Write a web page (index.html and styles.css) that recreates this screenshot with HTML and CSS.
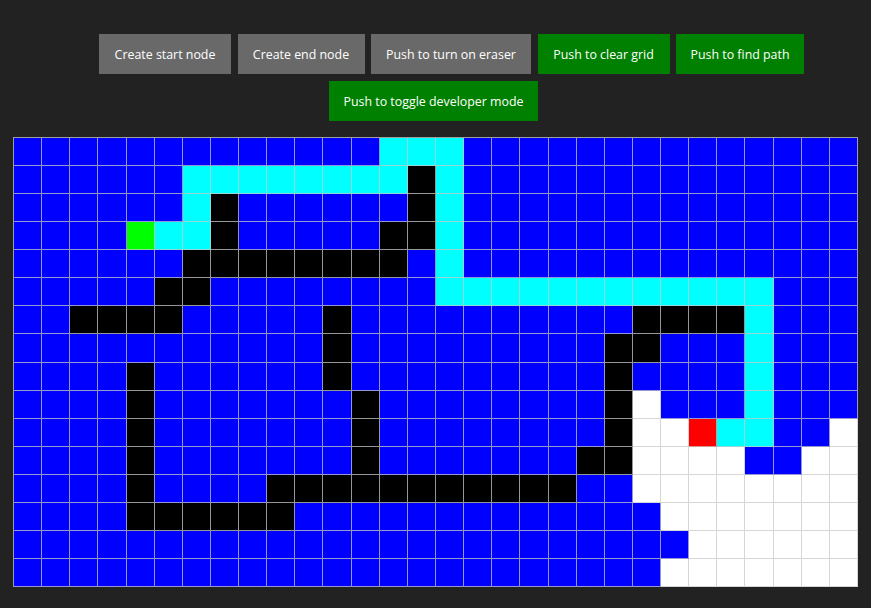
FILE: index.html
```html
<!DOCTYPE html>
<html lang="en">
<head>
<meta charset="utf-8">
<title>Pathfinding Visualizer</title>
<link rel="stylesheet" href="styles.css">
</head>
<body>
<div class="page">
  <div class="controls">
    <div class="row row-main">
      <button class="btn btn-gray btn-start">Create start node</button>
      <button class="btn btn-gray btn-end">Create end node</button>
      <button class="btn btn-gray btn-eraser">Push to turn on eraser</button>
      <button class="btn btn-green btn-clear">Push to clear grid</button>
      <button class="btn btn-green btn-find">Push to find path</button>
    </div>
    <div class="row row-dev">
      <button class="btn btn-green btn-dev">Push to toggle developer mode</button>
    </div>
  </div>
  <div class="grid">
    <!-- row 0 -->
    <i></i><i></i><i></i><i></i><i></i><i></i><i></i><i></i><i></i><i></i><i></i><i></i><i></i><i class="c"></i><i class="c"></i><i class="c"></i><i></i><i></i><i></i><i></i><i></i><i></i><i></i><i></i><i></i><i></i><i></i><i></i><i></i><i></i>
    <!-- row 1 -->
    <i></i><i></i><i></i><i></i><i></i><i></i><i class="c"></i><i class="c"></i><i class="c"></i><i class="c"></i><i class="c"></i><i class="c"></i><i class="c"></i><i class="c"></i><i class="k"></i><i class="c"></i><i></i><i></i><i></i><i></i><i></i><i></i><i></i><i></i><i></i><i></i><i></i><i></i><i></i><i></i>
    <!-- row 2 -->
    <i></i><i></i><i></i><i></i><i></i><i></i><i class="c"></i><i class="k"></i><i></i><i></i><i></i><i></i><i></i><i></i><i class="k"></i><i class="c"></i><i></i><i></i><i></i><i></i><i></i><i></i><i></i><i></i><i></i><i></i><i></i><i></i><i></i><i></i>
    <!-- row 3 -->
    <i></i><i></i><i></i><i></i><i class="g"></i><i class="c"></i><i class="c"></i><i class="k"></i><i></i><i></i><i></i><i></i><i></i><i class="k"></i><i class="k"></i><i class="c"></i><i></i><i></i><i></i><i></i><i></i><i></i><i></i><i></i><i></i><i></i><i></i><i></i><i></i><i></i>
    <!-- row 4 -->
    <i></i><i></i><i></i><i></i><i></i><i></i><i class="k"></i><i class="k"></i><i class="k"></i><i class="k"></i><i class="k"></i><i class="k"></i><i class="k"></i><i class="k"></i><i></i><i class="c"></i><i></i><i></i><i></i><i></i><i></i><i></i><i></i><i></i><i></i><i></i><i></i><i></i><i></i><i></i>
    <!-- row 5 -->
    <i></i><i></i><i></i><i></i><i></i><i class="k"></i><i class="k"></i><i></i><i></i><i></i><i></i><i></i><i></i><i></i><i></i><i class="c"></i><i class="c"></i><i class="c"></i><i class="c"></i><i class="c"></i><i class="c"></i><i class="c"></i><i class="c"></i><i class="c"></i><i class="c"></i><i class="c"></i><i class="c"></i><i></i><i></i><i></i>
    <!-- row 6 -->
    <i></i><i></i><i class="k"></i><i class="k"></i><i class="k"></i><i class="k"></i><i></i><i></i><i></i><i></i><i></i><i class="k"></i><i></i><i></i><i></i><i></i><i></i><i></i><i></i><i></i><i></i><i></i><i class="k"></i><i class="k"></i><i class="k"></i><i class="k"></i><i class="c"></i><i></i><i></i><i></i>
    <!-- row 7 -->
    <i></i><i></i><i></i><i></i><i></i><i></i><i></i><i></i><i></i><i></i><i></i><i class="k"></i><i></i><i></i><i></i><i></i><i></i><i></i><i></i><i></i><i></i><i class="k"></i><i class="k"></i><i></i><i></i><i></i><i class="c"></i><i></i><i></i><i></i>
    <!-- row 8 -->
    <i></i><i></i><i></i><i></i><i class="k"></i><i></i><i></i><i></i><i></i><i></i><i></i><i class="k"></i><i></i><i></i><i></i><i></i><i></i><i></i><i></i><i></i><i></i><i class="k"></i><i></i><i></i><i></i><i></i><i class="c"></i><i></i><i></i><i></i>
    <!-- row 9 -->
    <i></i><i></i><i></i><i></i><i class="k"></i><i></i><i></i><i></i><i></i><i></i><i></i><i></i><i class="k"></i><i></i><i></i><i></i><i></i><i></i><i></i><i></i><i></i><i class="k"></i><i class="o"></i><i></i><i></i><i></i><i class="c"></i><i></i><i></i><i></i>
    <!-- row 10 -->
    <i></i><i></i><i></i><i></i><i class="k"></i><i></i><i></i><i></i><i></i><i></i><i></i><i></i><i class="k"></i><i></i><i></i><i></i><i></i><i></i><i></i><i></i><i></i><i class="k"></i><i class="o"></i><i class="o"></i><i class="r"></i><i class="c"></i><i class="c"></i><i></i><i></i><i class="o"></i>
    <!-- row 11 -->
    <i></i><i></i><i></i><i></i><i class="k"></i><i></i><i></i><i></i><i></i><i></i><i></i><i></i><i class="k"></i><i></i><i></i><i></i><i></i><i></i><i></i><i></i><i class="k"></i><i class="k"></i><i class="o"></i><i class="o"></i><i class="o"></i><i class="o"></i><i></i><i></i><i class="o"></i><i class="o"></i>
    <!-- row 12 -->
    <i></i><i></i><i></i><i></i><i class="k"></i><i></i><i></i><i></i><i></i><i class="k"></i><i class="k"></i><i class="k"></i><i class="k"></i><i class="k"></i><i class="k"></i><i class="k"></i><i class="k"></i><i class="k"></i><i class="k"></i><i class="k"></i><i></i><i></i><i class="o"></i><i class="o"></i><i class="o"></i><i class="o"></i><i class="o"></i><i class="o"></i><i class="o"></i><i class="o"></i>
    <!-- row 13 -->
    <i></i><i></i><i></i><i></i><i class="k"></i><i class="k"></i><i class="k"></i><i class="k"></i><i class="k"></i><i class="k"></i><i></i><i></i><i></i><i></i><i></i><i></i><i></i><i></i><i></i><i></i><i></i><i></i><i></i><i class="o"></i><i class="o"></i><i class="o"></i><i class="o"></i><i class="o"></i><i class="o"></i><i class="o"></i>
    <!-- row 14 -->
    <i></i><i></i><i></i><i></i><i></i><i></i><i></i><i></i><i></i><i></i><i></i><i></i><i></i><i></i><i></i><i></i><i></i><i></i><i></i><i></i><i></i><i></i><i></i><i></i><i class="o"></i><i class="o"></i><i class="o"></i><i class="o"></i><i class="o"></i><i class="o"></i>
    <!-- row 15 -->
    <i></i><i></i><i></i><i></i><i></i><i></i><i></i><i></i><i></i><i></i><i></i><i></i><i></i><i></i><i></i><i></i><i></i><i></i><i></i><i></i><i></i><i></i><i></i><i class="o"></i><i class="o"></i><i class="o"></i><i class="o"></i><i class="o"></i><i class="o"></i><i class="o"></i>
  </div>
</div>
</body>
</html>
```
FILE: styles.css
```css
* { box-sizing: border-box; }

html, body {
  margin: 0;
  padding: 0;
  background: #222222;
}

.page {
  padding-top: 34px;
  font-family: "Open Sans", "Noto Sans", "DejaVu Sans", sans-serif;
}

.controls {
  display: flex;
  flex-direction: column;
  align-items: center;
  gap: 7px;
}

.row {
  display: flex;
  gap: 6.5px;
}

.row-main { margin-left: 32px; }
.row-dev { margin-right: 4px; }

.btn {
  height: 40px;
  border: none;
  border-radius: 0;
  padding: 1px 0 0;
  margin: 0;
  color: #ffffff;
  font-family: "Open Sans", "Noto Sans", "DejaVu Sans", sans-serif;
  font-size: 12.4px;
  line-height: 39px;
  text-align: center;
  cursor: pointer;
}

.btn-gray { background: #696969; }
.btn-green { background: #008000; }

.btn-start { width: 132px; }
.btn-end { width: 127px; }
.btn-eraser { width: 160px; }
.btn-clear { width: 132px; }
.btn-find { width: 128px; }
.btn-dev { width: 209px; }

.grid {
  margin: 16px 0 0 13px;
  width: 845px;
  height: 450px;
  display: grid;
  grid-template-columns: repeat(30, 1fr);
  grid-template-rows: repeat(16, 1fr);
  border-left: 1px solid rgba(200, 200, 200, 0.75);
  border-top: 1px solid rgba(200, 200, 200, 0.75);
}

.grid i {
  display: block;
  background: #0000ff;
  border-right: 1px solid rgba(200, 200, 200, 0.75);
  border-bottom: 1px solid rgba(200, 200, 200, 0.75);
}

.grid i.k { background: #000000; }
.grid i.c { background: #00ffff; }
.grid i.g { background: #00ff00; }
.grid i.r { background: #ff0000; }
.grid i.o { background: #ffffff; }
```
